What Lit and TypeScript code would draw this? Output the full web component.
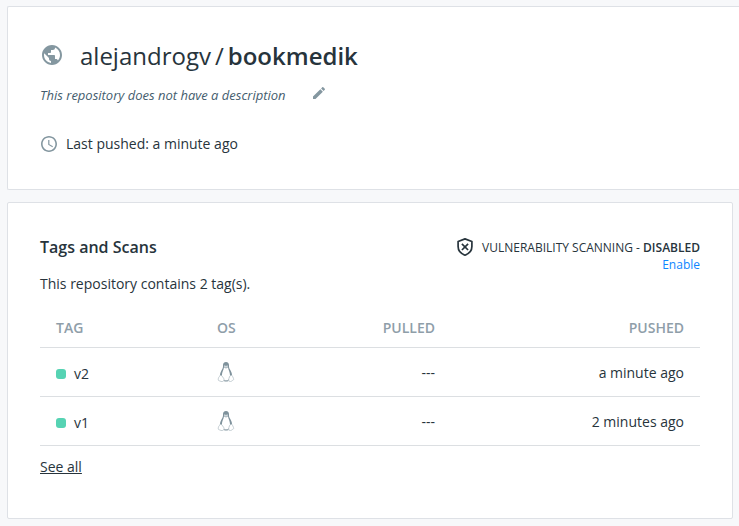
import { LitElement, html, css, svg } from "lit";
import { customElement, property } from "lit/decorators.js";

interface Tag {
  name: string;
  pulled: string;
  pushed: string;
}

const globeIcon = html`<svg class="globe" viewBox="0 0 24 24" aria-hidden="true">
  <path d="M12 2C6.48 2 2 6.48 2 12s4.48 10 10 10 10-4.480 10-10S17.520 2 12 2zm-1 17.930c-3.950-.490-7-3.850-7-7.930 0-.620.080-1.210.210-1.790L9 15v1c0 1.100.900 2 2 2v1.930zm6.900-2.540c-.260-.810-1-1.390-1.900-1.390h-1v-3c0-.550-.450-1-1-1H8v-2h2c.550 0 1-.450 1-1V7h2c1.100 0 2-.900 2-2v-.410c2.930 1.190 5 4.060 5 7.410 0 2.080-.800 3.970-2.100 5.390z" />
</svg>`;

const editIcon = html`<svg class="edit" viewBox="0 0 24 24" aria-hidden="true">
  <path d="M3 17.250V21h3.750L17.810 9.940l-3.750-3.750L3 17.250zM20.710 7.040c.390-.390.390-1.020 0-1.410l-2.340-2.340c-.390-.390-1.020-.390-1.410 0l-1.830 1.830 3.750 3.750 1.830-1.830z" />
</svg>`;

const clockIcon = html`<svg class="clock" viewBox="2 2 20 20" aria-hidden="true">
  <path d="M11.990 2C6.470 2 2 6.480 2 12s4.470 10 9.990 10C17.520 22 22 17.520 22 12S17.520 2 11.990 2zM12 20c-4.420 0-8-3.580-8-8s3.580-8 8-8 8 3.580 8 8-3.580 8-8 8zm.500-13H11v6l5.250 3.150.750-1.230-4.500-2.670z" />
</svg>`;

const shieldIcon = html`<svg class="shield" viewBox="0 0 16 18" aria-hidden="true">
  <path d="M8 .9 14.900 3.500V8.600C14.900 12.800 12 15.800 8 17.200 4 15.800 1.100 12.800 1.100 8.600V3.500Z" fill="none" stroke="currentColor" stroke-width="1.700" stroke-linejoin="round" />
  <path d="M4.900 5.800l6.200 6.200M11.100 5.800l-6.200 6.200" stroke="currentColor" stroke-width="1.700" />
</svg>`;

const penguinShapes = svg`
  <path d="M8 0C6 0 4.900 1.400 5 3.300c.1 1.900-.1 2.700-1 4.100C2.900 9.300 1.900 11.500 1.900 13.600l2.300 3.600c1.800 2.700 5.800 2.700 7.600 0l2.300-3.600c0-2.200-.9-4.400-2.100-6.200-.9-1.400-1.100-2.200-1-4.100C11 1.400 10 0 8 0Z" fill="#7f929c" />
  <path d="M6 5.400C5.500 8 3.900 10.300 3.900 13.200c0 3.200 1.500 5.300 4.100 5.300s4-2.100 4-5.300c0-2.900-1.500-5.200-2-7.800Z" fill="#fff" />
  <path d="M6 3.900c.4-.8 1.200-.8 1.700 0h.6c.4-.8 1.200-.8 1.600 0v1.500L8 6.600 6 5.400Z" fill="#d0d8dc" />
  <path d="M6.200 5 8 6 9.800 5" fill="none" stroke="#8497a0" stroke-width=".5" />
  <path d="M2.200 13.300c.9-.3 1.900.6 2.600 1.800.6 1 1.500 1.900 1.200 3-.3 1.400-1.700 1.900-3 1.300-1-.5-2-.5-2.500-1-.5-.5-.1-1.200-.1-2 0-1 .8-1.200 1.800-3.100ZM13.800 13.300c-.9-.3-2 .6-2.400 1.800-.2 1-.9 2-.7 3 .2 1.400 1.400 1.900 2.600 1.200.8-.6 1.400-1 2-1.400.8-.5.4-1 .1-1.600-.3-.6-.4-1.500-1.600-3Z" fill="#fff" stroke="#b3bfc5" stroke-width=".8" />
  <path d="M6.300 19h4" stroke="#9fadb5" stroke-width=".9" />`;

const linuxIcon = html`<svg class="linux" viewBox="0 0 16 20" role="img" aria-label="Linux">${penguinShapes}</svg>`;

@customElement("app-root")
export class AppRoot extends LitElement {
  @property({ attribute: false })
  tags: Tag[] = [
    { name: "v2", pulled: "---", pushed: "a minute ago" },
    { name: "v1", pulled: "---", pushed: "2 minutes ago" },
  ];

  static styles = css`
    :host {
      display: block;
      box-sizing: border-box;
      min-height: 100vh;
      padding: 6px 0 7px 7px;
      background: #f7f8fa;
      color: #27343c;
      font: 14px/20px "Open Sans", sans-serif;
    }
    svg {
      display: block;
      flex: none;
      fill: currentColor;
    }
    .card {
      box-sizing: border-box;
      padding: 32px;
      background: #fff;
      border: 1px solid #dee1e6;
      border-radius: 2px;
    }
    .summary {
      border-right: 0;
      border-radius: 2px 0 0 2px;
      padding-bottom: 35px;
    }
    .tags {
      margin: 12px 6px 0 0;
      padding-bottom: 41px;
    }
    .heading,
    .description,
    .pushed,
    .tags-head,
    .scan,
    .tag {
      display: flex;
      align-items: center;
    }
    .heading {
      gap: 16px;
    }
    .globe,
    .clock,
    .edit {
      color: #8497a0;
    }
    .globe {
      width: 24px;
      height: 24px;
      margin-bottom: 2px;
    }
    h1 {
      display: flex;
      gap: 4px;
      margin: 0;
      font-size: 24px;
      line-height: 34px;
      font-weight: 400;
    }
    h1 strong,
    .scan strong {
      font-weight: 600;
    }
    .description {
      gap: 25px;
      margin-top: 12px;
      color: #445d6e;
      font-size: 13px;
      font-style: italic;
    }
    .edit-button {
      margin: 0;
      padding: 0 0 4px;
      border: 0;
      background: none;
      cursor: pointer;
    }
    .edit {
      width: 16px;
      height: 16px;
    }
    .pushed {
      gap: 9px;
      margin-top: 29px;
      padding-left: 1px;
    }
    .clock {
      width: 16px;
      height: 16px;
    }
    .tags-head {
      justify-content: space-between;
      align-items: flex-start;
    }
    h2 {
      margin: 0;
      font-size: 16px;
      line-height: 24px;
      font-weight: 600;
    }
    .status {
      display: flex;
      flex-direction: column;
      align-items: flex-end;
      padding-top: 3px;
      font-size: 12px;
      line-height: 17px;
    }
    .scan {
      gap: 9px;
    }
    .shield {
      width: 16px;
      height: 18px;
    }
    .enable {
      color: #0d86ff;
      text-decoration: none;
    }
    .count {
      margin: 1px 0 14px;
    }
    table {
      width: 100%;
      table-layout: fixed;
      border-collapse: collapse;
    }
    th,
    td {
      box-sizing: border-box;
      padding: 0 16px;
      border-bottom: 1px solid #dcdfe2;
      text-align: left;
    }
    th {
      height: 39px;
      padding-top: 2px;
      color: #8f9ea9;
      font-weight: 600;
    }
    td {
      height: 49px;
    }
    .col-tag {
      width: 161px;
    }
    .col-os {
      width: 106px;
    }
    .col-pulled {
      width: 144px;
    }
    .number {
      text-align: right;
    }
    td.number {
      padding-top: 2px;
    }
    .tag {
      gap: 8px;
      padding-top: 4px;
    }
    .dot {
      width: 10px;
      height: 10px;
      border-radius: 3px;
      background: #56d3b3;
    }
    .linux {
      width: 18px;
      height: 20px;
    }
    .see-all {
      display: inline-block;
      margin-top: 11px;
      color: inherit;
      text-decoration: underline;
    }
  `;

  render() {
    return html`
      <section class="card summary">
        <div class="heading">
          ${globeIcon}
          <h1><span>alejandrogv</span><span>/</span><strong>bookmedik</strong></h1>
        </div>
        <div class="description">
          <span>This repository does not have a description</span>
          <button class="edit-button" type="button" aria-label="Edit description">${editIcon}</button>
        </div>
        <div class="pushed">${clockIcon}<span>Last pushed: a minute ago</span></div>
      </section>

      <section class="card tags">
        <div class="tags-head">
          <h2>Tags and Scans</h2>
          <div class="status">
            <div class="scan">
              ${shieldIcon}
              <span>VULNERABILITY SCANNING - <strong>DISABLED</strong></span>
            </div>
            <a class="enable" href="#enable">Enable</a>
          </div>
        </div>
        <p class="count">This repository contains ${this.tags.length} tag(s).</p>
        <table>
          <thead>
            <tr>
              <th class="col-tag" scope="col">TAG</th>
              <th class="col-os" scope="col">OS</th>
              <th class="col-pulled number" scope="col">PULLED</th>
              <th class="number" scope="col">PUSHED</th>
            </tr>
          </thead>
          <tbody>
            ${this.tags.map(
              (tag) => html`
                <tr>
                  <td><div class="tag"><span class="dot"></span>${tag.name}</div></td>
                  <td>${linuxIcon}</td>
                  <td class="number">${tag.pulled}</td>
                  <td class="number">${tag.pushed}</td>
                </tr>
              `
            )}
          </tbody>
        </table>
        <a class="see-all" href="#tags">See all</a>
      </section>
    `;
  }
}
